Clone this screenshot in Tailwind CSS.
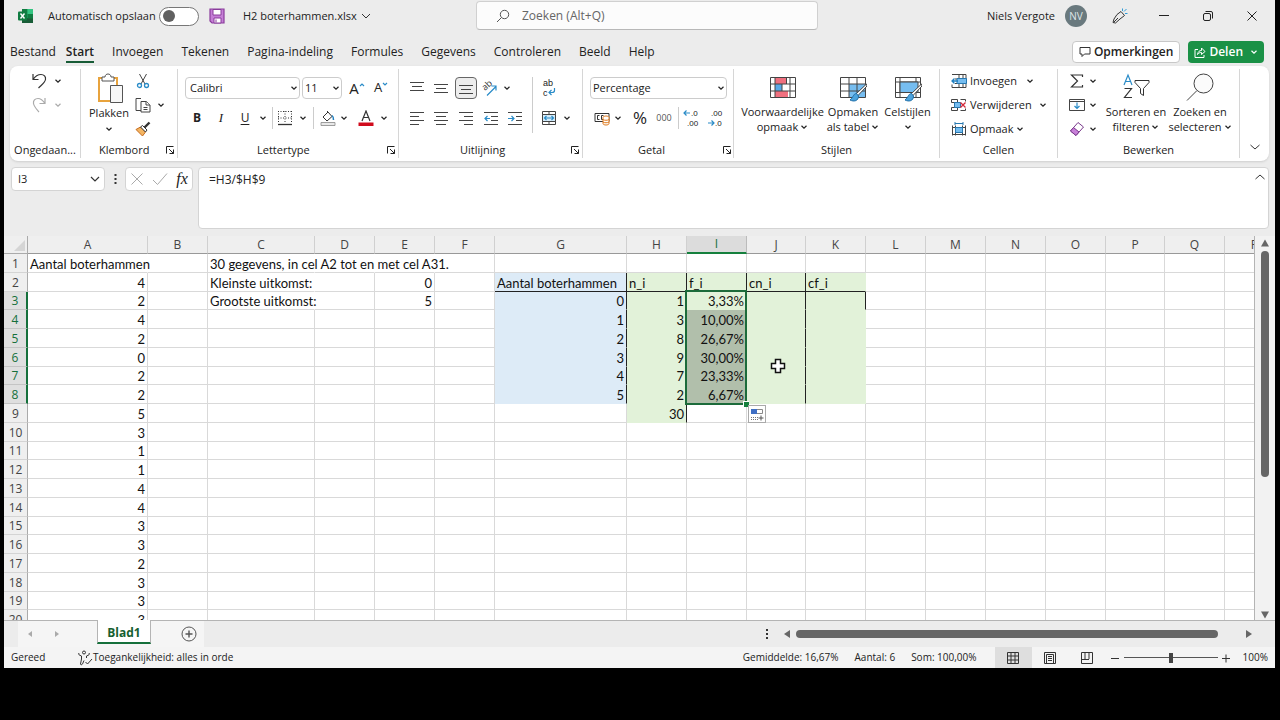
<!DOCTYPE html>
<html lang="nl">
<head>
    <meta charset="UTF-8">
    <meta name="viewport" content="width=device-width, initial-scale=1.0">
    <title>H2 boterhammen.xlsx - Excel</title>
    <script src="https://cdn.jsdelivr.net/npm/@tailwindcss/browser@4"></script>
</head>
<body class="bg-black h-screen overflow-hidden flex flex-col pl-1 pr-[5px] pb-13 font-['Open_Sans','Noto_Sans',sans-serif] text-[11px] text-[#222]">

    <!-- Shared icons -->
    <svg class="hidden">
        <symbol id="chev" viewBox="0 0 8 8"><path d="M1.5 2.8 4 5.2 6.5 2.8" fill="none" stroke="currentColor" stroke-width="1.2"/></symbol>
        <symbol id="launch" viewBox="0 0 10 10"><path d="M1.5 8.5v-7h7M4 4l4.500 4.500M8.500 4.500v4h-4" fill="none" stroke="currentColor"/></symbol>
    </svg>

    <div class="flex-1 min-h-0 flex flex-col bg-[#ececec]">

        <!-- Title bar -->
        <header class="grid grid-cols-[472px_342px_1fr] h-8 shrink-0">
            <div class="flex items-center pl-3.5">
                <svg class="w-4 h-4" viewBox="0 0 16 16">
                    <path d="M4 1h11v14H4z" fill="#21a366"/>
                    <path d="M4 1h5.500v5H4z" fill="#107c41"/><path d="M9.500 1H15v5H9.500z" fill="#33c481"/>
                    <path d="M4 10h11v5H4z" fill="#185c37"/><path d="M9.500 6H15v4.500H9.500z" fill="#107c41"/>
                    <rect y="3.500" width="9" height="9" rx="1" fill="#107c41"/>
                    <path d="m2.500 5.500 4 5m0-5-4 5" stroke="#fff" stroke-width="1.400"/>
                </svg>
                <label for="autosave" class="ml-3.5 w-[107px] whitespace-nowrap">Automatisch opslaan</label>
                <input id="autosave" type="checkbox" class="appearance-none ml-1 w-10 h-[19px] rounded-full border border-[#777] bg-white flex items-center before:content-[''] before:block before:w-3 before:h-3 before:ml-[3px] before:rounded-full before:bg-[#606060] checked:before:ml-6">
                <button aria-label="Opslaan" class="ml-2.5">
                    <svg class="w-4 h-4" viewBox="0 0 16 16"><path d="M1 1h14v14H3l-2-2z" fill="#c57fd6" stroke="#8a3c9c" stroke-width="1.200"/><path d="M4 1.500h8v5.500H4z" fill="#fff" stroke="#8a3c9c"/><path d="M5 10h7v5H5z" fill="#fff" stroke="#8a3c9c"/><path d="M7 11.500v3" stroke="#8a3c9c"/></svg>
                </button>
                <button class="ml-[18px] flex items-center gap-1 whitespace-nowrap">H2 boterhammen.xlsx
                    <svg class="w-2.5 h-2.5" viewBox="0 0 10 10"><path d="m1 3 4 4 4-4" fill="none" stroke="#333"/></svg>
                </button>
            </div>
            <label class="h-[29px] mt-px flex items-center bg-[#fcfcfc] border border-[#d0d0d0] border-b-[#b8b8b8] rounded pl-[19px]">
                <svg class="w-3.5 h-3.5" viewBox="0 0 14 14" fill="none" stroke="#555"><circle cx="8.500" cy="5.500" r="4.200"/><path d="M5.500 8.500 1 13"/></svg>
                <input type="text" aria-label="Zoeken" placeholder="Zoeken (Alt+Q)" class="flex-1 ml-3 text-[12px] outline-none placeholder:text-[#666]">
            </label>
            <div class="flex items-center justify-end pr-px">
                <span>Niels Vergote</span>
                <span class="ml-2.5 mr-[11px] w-[22px] h-[22px] rounded-full bg-[#69797e] text-[#dfe6e8] text-[10px] flex items-center justify-center">NV</span>
                <button aria-label="Pen" class="w-11 h-8 flex items-center justify-center">
                    <svg class="w-4 h-4" viewBox="0 0 16 16" fill="none" stroke="#333"><path d="m9 3.500 3.500 4-4.500 3.500L3.500 15 1 14.500 2 11l3-4.500zM2 14l4-4"/><path d="M10.500 3V.5M12 3.500l2.500-2.500M13 5.500h2.500" stroke="#2f9bd6"/></svg>
                </button>
                <button aria-label="Minimaliseren" class="w-11 h-8 flex items-center justify-center"><svg class="w-2.5 h-2.5" viewBox="0 0 10 10"><path d="M0 4.500h10" stroke="#222"/></svg></button>
                <button aria-label="Vorig formaat" class="w-11 h-8 flex items-center justify-center"><svg class="w-2.5 h-2.5" viewBox="0 0 10 10" fill="none" stroke="#222"><rect x=".5" y="2.500" width="7" height="7" rx="1.500"/><path d="M2.500.5H8A1.500 1.500 0 0 1 9.500 2v5.500"/></svg></button>
                <button aria-label="Sluiten" class="w-11 h-8 flex items-center justify-center"><svg class="w-2.5 h-2.5" viewBox="0 0 10 10"><path d="m.5.5 9 9m0-9-9 9" stroke="#222"/></svg></button>
            </div>
        </header>

        <!-- Ribbon tabs -->
        <nav class="flex items-center justify-between h-[34px] shrink-0 pl-1.5 pr-[11px]">
            <div class="flex items-center gap-[18px] pt-1.5 text-[12px] whitespace-nowrap">
                <button class="-mr-2">Bestand</button>
                <button class="font-semibold border-b-2 border-[#185c37] -mb-0.5">Start</button>
                <button>Invoegen</button>
                <button>Tekenen</button>
                <button>Pagina-indeling</button>
                <button>Formules</button>
                <button>Gegevens</button>
                <button>Controleren</button>
                <button>Beeld</button>
                <button>Help</button>
            </div>
            <div class="flex gap-2 pt-1.5 text-[12px] font-semibold">
                <button class="h-[22px] px-1.5 flex items-center gap-[3px] bg-white border border-[#c8c8c8] rounded whitespace-nowrap">
                    <svg class="w-3 h-3" viewBox="0 0 12 12"><path d="M1 1.500h10v6.500H5.500L3 10.500V8H1z" fill="none" stroke="#333"/></svg>Opmerkingen
                </button>
                <button class="h-[22px] px-1.5 flex items-center gap-[3px] bg-[#1a9146] text-white rounded">
                    <svg class="w-3 h-3" viewBox="0 0 12 12" fill="none" stroke="#fff"><path d="M4 3.500H1v8h9V9M3.500 8.500C4 5.500 5.500 4.500 7.500 4.500V2L11 5.500 7.500 8.500V6.500c-2 0-3 .5-4 2z"/></svg>Delen
                    <svg class="w-2 h-2 ml-1"><use href="#chev"/></svg>
                </button>
            </div>
        </nav>

        <!-- Ribbon -->
        <section class="mx-1.5 h-[95px] shrink-0 bg-white rounded-lg shadow-sm flex whitespace-nowrap *:my-[3px]">
            <div class="w-[71px] flex flex-col border-r border-[#d6d6d6]">
                <div class="flex-1 flex flex-col gap-1 pt-0.5 pl-5">
                    <div class="h-5 flex items-center gap-1.5">
                        <button aria-label="Ongedaan maken"><svg class="w-[18px] h-[18px]" viewBox="0 0 18 18"><path d="M3 2v5.500h5.500M3 7.500C5 4.500 8 2.500 11 2.500c3 0 5 2 4.500 5C15 10.500 12 12.500 8.500 16" fill="none" stroke="#333" stroke-width="1.200"/></svg></button>
                        <svg class="w-2 h-2"><use href="#chev"/></svg>
                    </div>
                    <div class="h-5 flex items-center gap-1.5 text-[#aaa]">
                        <button aria-label="Opnieuw"><svg class="w-[18px] h-[18px]" viewBox="0 0 18 18"><path d="M15 2v5.500H9.500M15 7.500C13 4.500 11 2.500 8 2.500c-3 0-5 2-4.500 5C4 10.500 6 12.500 9 16" fill="none" stroke="currentColor" stroke-width="1.200"/></svg></button>
                        <svg class="w-2 h-2"><use href="#chev"/></svg>
                    </div>
                </div>
                <div class="h-4 flex items-center justify-center">Ongedaan...</div>
            </div>

            <div class="w-[97px] flex flex-col border-r border-[#d6d6d6]">
                <div class="flex-1 flex pl-2">
                    <button class="w-10 pt-1 flex flex-col items-center">
                        <svg class="w-7 h-8 ml-1" viewBox="0 0 28 32">
                            <path d="M2 5h18v23H2z" fill="#fff" stroke="#e8a33d" stroke-width="2"/>
                            <path d="M5 8V4h3c0-2 1.500-3 3-3s3 1 3 3h3v4z" fill="#fff" stroke="#555"/>
                            <path d="M13.500 12.500h12v17h-12z" fill="#f7f7f7" stroke="#555"/>
                        </svg>
                        <span class="leading-4">Plakken</span>
                        <svg class="w-2 h-2 mt-1"><use href="#chev"/></svg>
                    </button>
                    <div class="ml-1.5 pt-0.5 flex flex-col gap-1">
                        <button aria-label="Knippen" class="h-5 flex items-center"><svg class="w-4 h-4" viewBox="0 0 16 16" fill="none"><path d="m4.500 1 5.500 10M11.500 1 6 11" stroke="#444"/><circle cx="4.500" cy="12.500" r="2" stroke="#2a8cc8" stroke-width="1.300"/><circle cx="11.500" cy="12.500" r="2" stroke="#2a8cc8" stroke-width="1.300"/></svg></button>
                        <button aria-label="Kopiëren" class="h-5 flex items-center gap-1.5"><svg class="w-4 h-4" viewBox="0 0 16 16" fill="#fff" stroke="#444"><path d="M6 1.500H1v12h5"/><path d="M6 4.500h5.500L15 8v7H6z"/><path d="M11 4.500V8h4M8.500 10.500h4M8.500 12.500h4"/></svg><svg class="w-2 h-2"><use href="#chev"/></svg></button>
                        <button aria-label="Opmaak kopiëren" class="h-5 flex items-center"><svg class="w-4 h-4" viewBox="0 0 16 16"><path d="M1 8.500 5.500 6l5 5-3 4z" fill="#f3b562" stroke="#c66a1c"/><path d="m5.500 6 2-1.500L12 9l-1.500 2z" fill="#fff" stroke="#333"/><path d="m9.500 6.500 5-5" stroke="#333" stroke-width="2.400"/></svg></button>
                    </div>
                </div>
                <div class="h-4 flex items-center pl-[18px] justify-between pr-0.5">Klembord<svg class="w-2.5 h-2.5"><use href="#launch"/></svg></div>
            </div>

            <div class="w-[221px] flex flex-col border-r border-[#d6d6d6]">
                <div class="flex-1 flex flex-col gap-2 pt-2 pl-[7px]">
                    <div class="h-[22px] flex items-center">
                        <label class="relative w-[115px] h-[22px]"><select aria-label="Lettertype" class="appearance-none w-full h-full border border-[#ccc] rounded pl-1 bg-white"><option>Calibri</option></select><svg class="w-2 h-2 absolute right-0.5 top-[7px]"><use href="#chev"/></svg></label>
                        <label class="relative w-10 h-[22px] ml-0.5"><select aria-label="Tekengrootte" class="appearance-none w-full h-full border border-[#ccc] rounded pl-0.5 bg-white"><option>11</option></select><svg class="w-2 h-2 absolute right-0.5 top-[7px]"><use href="#chev"/></svg></label>
                        <button aria-label="Lettertype vergroten" class="w-6 flex items-center justify-center ml-[3px] text-[15px]">A<svg class="w-1.5 h-3" viewBox="0 0 6 12"><path d="m1 4 2-2 2 2" fill="none" stroke="#2a8cc8" stroke-width="1.200"/></svg></button>
                        <button aria-label="Lettertype verkleinen" class="w-6 flex items-center justify-center text-[13px]">A<svg class="w-1.5 h-3" viewBox="0 0 6 12"><path d="m1 1 2 2 2-2" fill="none" stroke="#2a8cc8" stroke-width="1.200"/></svg></button>
                    </div>
                    <div class="h-[22px] flex items-center">
                        <button class="w-6 text-[12px] font-bold">B</button>
                        <button class="w-6 text-[13px] italic font-['Liberation_Serif',serif]">I</button>
                        <button class="w-6 text-[12px] underline underline-offset-2">U</button>
                        <svg class="w-2 h-2 ml-0.5 mr-[5px]"><use href="#chev"/></svg>
                        <span class="w-px h-[22px] bg-[#ccc] mr-1"></span>
                        <button aria-label="Randen" class="w-4"><svg class="w-4 h-4" viewBox="0 0 16 16" stroke="#333" fill="none"><path d="M1.500 1v12M14.500 1v12M8 1v12M1 1.500h14M1 8h14" stroke-dasharray="1 1.500"/><path d="M1 14.500h14" stroke-width="1.300"/></svg></button>
                        <svg class="w-2 h-2 mx-1.5"><use href="#chev"/></svg>
                        <span class="w-px h-[22px] bg-[#ccc] mr-1.5"></span>
                        <button aria-label="Opvulkleur" class="w-4"><svg class="w-4 h-4" viewBox="0 0 16 16" stroke="#333" fill="none"><path d="m3 7 5-5 4 4.500-5 4.500zM8 2 7 1"/><path d="M12 5.500c1.500 1 1.500 2 1.500 4.500" stroke="#1f7fc0" stroke-width="1.500"/><path d="M1 12.500h14v3H1z" fill="#e8e8e8" stroke="#888" stroke-width=".8"/></svg></button>
                        <svg class="w-2 h-2 mx-1"><use href="#chev"/></svg>
                        <button aria-label="Tekstkleur" class="w-4 ml-1.5"><svg class="w-4 h-4" viewBox="0 0 16 16"><path d="M4 11 8 1l4 10M5.500 7.500h5" fill="none" stroke="#333" stroke-width="1.200"/><path d="M.5 12.500h15V16H.5z" fill="#d00b1c"/></svg></button>
                        <svg class="w-2 h-2 ml-1.5"><use href="#chev"/></svg>
                    </div>
                </div>
                <div class="h-4 flex items-center pl-[79px] justify-between pr-0.5">Lettertype<svg class="w-2.5 h-2.5"><use href="#launch"/></svg></div>
            </div>

            <div class="w-[184px] flex flex-col border-r border-[#d6d6d6]">
                <div class="flex-1 flex pt-2 pl-1.5">
                    <div class="w-[128px] h-14 border-r border-[#ccc] flex flex-col gap-2">
                        <div class="h-[22px] flex items-center">
                            <button aria-label="Boven uitlijnen" class="w-6 flex justify-center"><svg class="w-3.5 h-3.5" viewBox="0 0 14 14"><path d="M0 1.500h14M2 5.500h10M0 9.500h14" stroke="#444"/></svg></button>
                            <button aria-label="Midden uitlijnen" class="w-6 flex justify-center"><svg class="w-3.5 h-3.5" viewBox="0 0 14 14"><path d="M0 3.500h14M2 7.500h10M0 11.500h14" stroke="#444"/></svg></button>
                            <button aria-label="Onder uitlijnen" class="w-[22px] h-[22px] mx-0.5 flex items-center justify-center border border-[#666] rounded bg-[#ededed]"><svg class="w-3.5 h-3.5" viewBox="0 0 14 14"><path d="M0 4.500h14M2 8.500h10M0 12.500h14" stroke="#444"/></svg></button>
                            <button aria-label="Afdrukstand" class="w-5 flex justify-center"><svg class="w-[18px] h-[18px]" viewBox="0 0 18 18"><text font-size="9" fill="#333" transform="translate(5 12) rotate(-42)">ab</text><path d="m7 16.500 9-9M11.500 7H16v4.500" fill="none" stroke="#2a8cc8" stroke-width="1.200"/></svg></button>
                            <svg class="w-2 h-2 ml-1"><use href="#chev"/></svg>
                        </div>
                        <div class="h-[22px] flex items-center">
                            <button aria-label="Links uitlijnen" class="w-6 flex justify-center"><svg class="w-3.5 h-3.5" viewBox="0 0 14 14"><path d="M0 1.500h14M0 5.500h9M0 9.500h14M0 13.500h9" stroke="#444"/></svg></button>
                            <button aria-label="Centreren" class="w-6 flex justify-center"><svg class="w-3.5 h-3.5" viewBox="0 0 14 14"><path d="M0 1.500h14M2 5.500h10M0 9.500h14M2 13.500h10" stroke="#444"/></svg></button>
                            <button aria-label="Rechts uitlijnen" class="w-[26px] flex justify-center"><svg class="w-3.5 h-3.5" viewBox="0 0 14 14"><path d="M0 1.500h14M5 5.500h9M0 9.500h14M5 13.500h9" stroke="#444"/></svg></button>
                            <button aria-label="Inspringing verkleinen" class="w-6 flex justify-center"><svg class="w-3.5 h-3.5" viewBox="0 0 14 14"><path d="M0 1.500h14M7 5.500h7M7 9.500h7M0 13.500h14" stroke="#444"/><path d="M6 7.500H1m2.500-2.500L1 7.500 3.500 10" fill="none" stroke="#2a8cc8" stroke-width="1.200"/></svg></button>
                            <button aria-label="Inspringing vergroten" class="w-6 flex justify-center"><svg class="w-3.5 h-3.5" viewBox="0 0 14 14"><path d="M0 1.500h14M8 5.500h6M8 9.500h6M0 13.500h14" stroke="#444"/><path d="M0 7.500h6M3.500 5 6 7.500 3.500 10" fill="none" stroke="#2a8cc8" stroke-width="1.200"/></svg></button>
                        </div>
                    </div>
                    <div class="flex flex-col gap-2 pl-2">
                        <button aria-label="Terugloop" class="h-[22px] flex items-center"><svg class="w-4 h-5" viewBox="0 0 16 20"><g font-family="Liberation Sans" font-size="9" fill="#222"><text x="2" y="8">ab</text><text x="2" y="18">c</text></g><path d="M13.500 10v2.500c0 1.500-1 2-2.500 2H8m2.500-2.500L8 14.500l2.500 2.500" fill="none" stroke="#2a8cc8" stroke-width="1.200"/></svg></button>
                        <button aria-label="Samenvoegen en centreren" class="h-[22px] flex items-center gap-1.5"><svg class="w-4 h-4" viewBox="0 0 16 16"><path d="M1.500 1.500h13v13h-13zM8 1.500v3M8 11.500v3" fill="#fff" stroke="#444"/><path d="M1.500 4.500h13v7h-13z" fill="#d5ecfa" stroke="#444"/><path d="M3.500 8h9M5.500 6l-2 2 2 2M10.500 6l2 2-2 2" fill="none" stroke="#2a8cc8" stroke-width="1.200"/></svg><svg class="w-2 h-2"><use href="#chev"/></svg></button>
                    </div>
                </div>
                <div class="h-4 flex items-center pl-[61px] justify-between pr-0.5">Uitlijning<svg class="w-2.5 h-2.5"><use href="#launch"/></svg></div>
            </div>

            <div class="w-[151px] flex flex-col border-r border-[#d6d6d6]">
                <div class="flex-1 flex flex-col gap-2 pt-2 pl-[7px]">
                    <label class="relative w-[137px] h-[22px]"><select aria-label="Getalnotatie" class="appearance-none w-full h-full border border-[#ccc] rounded pl-0.5 bg-white"><option>Percentage</option></select><svg class="w-2 h-2 absolute right-0.5 top-[7px]"><use href="#chev"/></svg></label>
                    <div class="h-[22px] flex items-center">
                        <button aria-label="Financiële notatie" class="ml-1"><svg class="w-4 h-4" viewBox="0 0 16 16"><path d="M1 3.500h14v8H1z" fill="#fff" stroke="#333"/><path d="M5.500 5.500h-2v4h2M9.500 5.500h-2v4h2" fill="none" stroke="#333"/><path d="M9 7.500c0-2 6-2 6 0v6c0 2-6 2-6 0z" fill="#fff" stroke="#e07b1e"/><path d="M9 9.500c1 1 5 1 6 0M9 12c1 1 5 1 6 0" fill="none" stroke="#e07b1e"/></svg></button>
                        <svg class="w-2 h-2 ml-1"><use href="#chev"/></svg>
                        <button class="w-6 ml-1.5 text-[17px]">%</button>
                        <button class="w-6 text-[9px] text-[#555]">000</button>
                        <span class="w-px h-[22px] bg-[#ccc] ml-0.5 mr-1"></span>
                        <button aria-label="Meer decimalen" class="w-[18px]"><svg class="w-[18px] h-5" viewBox="0 0 18 20"><path d="M7 5H1m2.500-2.500L1 5l2.500 2.500" fill="none" stroke="#2a8cc8" stroke-width="1.200"/><g font-family="Liberation Sans" font-size="8" fill="#222"><text x="8" y="8">.0</text><text x="4" y="18">.00</text></g></svg></button>
                        <button aria-label="Minder decimalen" class="w-[18px] ml-1.5"><svg class="w-[18px] h-5" viewBox="0 0 18 20"><g font-family="Liberation Sans" font-size="8" fill="#222"><text x="4" y="8">.00</text><text x="8" y="18">.0</text></g><path d="M1 15h6M4.500 12.500 7 15l-2.500 2.500" fill="none" stroke="#2a8cc8" stroke-width="1.200"/></svg></button>
                    </div>
                </div>
                <div class="h-4 flex items-center pl-[55px] justify-between pr-px">Getal<svg class="w-2.5 h-2.5"><use href="#launch"/></svg></div>
            </div>

            <div class="w-[206px] flex flex-col border-r border-[#d6d6d6]">
                <div class="flex-1 flex pt-1.5 pl-1.5">
                    <button class="w-[85px] flex flex-col items-center leading-[15px]">
                        <svg class="w-7 h-7 mb-px" viewBox="0 0 28 28"><path d="M1.500 2.500h25v20h-25z" fill="#fff"/><path d="M6 2.500h11.500V9H6z M6 16h13v6.500H6z" fill="#f0707f"/><path d="M6 9h7v7H6z" fill="#5aa9e6"/><path d="M1.500 2.500h25v20h-25zM1.500 9h25M1.500 16h25M6 2.500v20M21 2.500v20M13 9v7M17.500 2.500V9" fill="none" stroke="#444"/></svg>
                        <span>Voorwaardelijke</span><span class="flex items-center gap-0.5">opmaak <svg class="w-2 h-2"><use href="#chev"/></svg></span>
                    </button>
                    <button class="w-14 flex flex-col items-center leading-[15px]">
                        <svg class="w-7 h-7 mb-px" viewBox="0 0 28 28"><path d="M1.500 2.500h25v20h-25z" fill="#fff"/><path d="M10 9h16.500v13.500H10z" fill="#76bdf0"/><path d="M1.500 2.500h25v20h-25zM1.500 9h25M1.500 16h25M10 2.500v20M18 2.500v20" fill="none" stroke="#444"/><path d="M27.500 9 17 19l1.500 2L28 11z" fill="#fff" stroke="#444"/><path d="M17.500 18.500c-3 0-3 3.500-6.500 6.500 4 2 8.500 1 8.500-4z" fill="#4ca3dd" stroke="#1f6fa8"/></svg>
                        <span>Opmaken</span><span class="flex items-center gap-0.5">als tabel <svg class="w-2 h-2"><use href="#chev"/></svg></span>
                    </button>
                    <button class="w-[53px] flex flex-col items-center leading-[15px]">
                        <svg class="w-7 h-7 mb-px" viewBox="0 0 28 28"><path d="M1.500 2.500h25v20h-25z" fill="#fff"/><path d="M1.500 2.500h25v20h-25zM1.500 7h25M1.500 17.500h25M6 2.500v20M22 2.500v20" fill="none" stroke="#444"/><path d="M6 7h18v10.500H6z" fill="#76bdf0" stroke="#444"/><path d="M27.500 9 17 19l1.500 2L28 11z" fill="#fff" stroke="#444"/><path d="M17.500 18.500c-3 0-3 3.500-6.500 6.500 4 2 8.500 1 8.500-4z" fill="#4ca3dd" stroke="#1f6fa8"/></svg>
                        <span>Celstijlen</span><svg class="w-2 h-2 mt-1"><use href="#chev"/></svg>
                    </button>
                </div>
                <div class="h-4 flex items-center justify-center">Stijlen</div>
            </div>

            <div class="w-[118px] flex flex-col border-r border-[#d6d6d6]">
                <div class="flex-1 flex flex-col gap-1 pt-0.5 pl-[11px] items-start">
                    <button class="h-5 flex items-center gap-[3px]"><svg class="w-4 h-4" viewBox="0 0 16 16"><path d="M4 1.500h11v13H1v-3M4 6h11M4 10.500h11M8 1.500v13M12 1.500v13M1 1.500h3" fill="none" stroke="#444"/><path d="M6 5.500h9.500v5H6z" fill="#76bdf0" stroke="#2878b0"/><path d="M7 8H1m2.500-2.500L1 8l2.500 2.500" fill="none" stroke="#1f7fc0" stroke-width="1.300"/></svg>Invoegen<svg class="w-2 h-2 ml-1.5"><use href="#chev"/></svg></button>
                    <button class="h-5 flex items-center gap-[3px]"><svg class="w-4 h-4" viewBox="0 0 16 16"><path d="M.5 2.500h6v3M.5 2.500v3h6M.5 13.500h6v-3h-6zM9.500 2.500h5v2M9.500 13.500h5v-2" fill="none" stroke="#444"/><path d="M3.500 5.500h6v5h-6z" fill="#76bdf0" stroke="#2878b0"/><path d="m9.500 5.500 5 5m0-5-5 5" stroke="#d42a3a" stroke-width="1.300"/></svg>Verwijderen<svg class="w-2 h-2 ml-1"><use href="#chev"/></svg></button>
                    <button class="h-5 flex items-center gap-[3px]"><svg class="w-4 h-4" viewBox="0 0 16 16"><path d="M1.500 4.500v10M14.500 4.500v10M1 6.500h14M1 13.500h14M4.500 4.500v10M11.500 4.500v10" fill="none" stroke="#444"/><path d="M4.500 6.500h7v5h-7z" fill="#76bdf0" stroke="#2878b0"/><path d="M4 1v3M12 1v3M4 2.500h8" stroke="#2878b0"/></svg>Opmaak<svg class="w-2 h-2"><use href="#chev"/></svg></button>
                </div>
                <div class="h-4 flex items-center justify-center">Cellen</div>
            </div>

            <div class="w-[182px] flex flex-col border-r border-[#d6d6d6]">
                <div class="flex-1 flex pl-[11px]">
                    <div class="flex flex-col gap-1 pt-0.5 w-[35px]">
                        <button aria-label="AutoSom" class="h-5 flex items-center gap-1"><svg class="w-4 h-4" viewBox="0 0 16 16"><path d="M13.500 4V2h-11L8.500 8l-6 6h11v-2" fill="none" stroke="#333" stroke-width="1.200"/></svg><svg class="w-2 h-2"><use href="#chev"/></svg></button>
                        <button aria-label="Doorvoeren" class="h-5 flex items-center gap-1"><svg class="w-4 h-4" viewBox="0 0 16 16"><path d="M.5 2.500h15v11H.5zM.5 4.500h15" fill="none" stroke="#444"/><path d="M8 5.500v6M5.500 9 8 11.500 10.500 9" fill="none" stroke="#2a8cc8" stroke-width="1.200"/></svg><svg class="w-2 h-2"><use href="#chev"/></svg></button>
                        <button aria-label="Wissen" class="h-5 flex items-center gap-1"><svg class="w-4 h-4" viewBox="0 0 16 16"><path d="M9 1.500 14.500 6 7 14.500 1.500 10z" fill="#fff" stroke="#7a3a8c"/><path d="m4.500 6.500 5.500 4.500-3 3.500L1.500 10z" fill="#c77fd8" stroke="#7a3a8c"/></svg><svg class="w-2 h-2"><use href="#chev"/></svg></button>
                    </div>
                    <button class="w-16 pt-1 flex flex-col items-center leading-[15px]">
                        <svg class="w-7 h-7 mb-[3px]" viewBox="0 0 28 28"><path d="m2 12 4-10 4 10M3.500 8.500h5" fill="none" stroke="#2a8cc8" stroke-width="1.200"/><path d="M2.500 15.500h7l-7 9h7.500" fill="none" stroke="#333" stroke-width="1.200"/><path d="M13 7.500h14v2l-5.500 6v7l-3-2v-5L13 9.500z" fill="none" stroke="#333"/></svg>
                        <span>Sorteren en</span><span class="flex items-center gap-0.5">filteren <svg class="w-2 h-2"><use href="#chev"/></svg></span>
                    </button>
                    <button class="w-16 pt-1 flex flex-col items-center leading-[15px]">
                        <svg class="w-7 h-7 mb-[3px]" viewBox="0 0 28 28" fill="none" stroke="#444"><circle cx="17.500" cy="10.500" r="9.500" fill="#fbfbfb"/><path d="M11 17.500 1 27.500"/></svg>
                        <span>Zoeken en</span><span class="flex items-center gap-0.5">selecteren <svg class="w-2 h-2"><use href="#chev"/></svg></span>
                    </button>
                </div>
                <div class="h-4 flex items-center justify-center">Bewerken</div>
            </div>

            <button aria-label="Lint samenvouwen" class="flex-1 flex items-end justify-center pb-1.5"><svg class="w-2.5 h-2.5" viewBox="0 0 10 10"><path d="m.5 3 4.500 4 4.500-4" fill="none" stroke="#333"/></svg></button>
        </section>

        <!-- Formula bar -->
        <section class="flex shrink-0 pt-1.5 pb-[7px] pl-[7px] pr-1.5">
            <div class="flex items-center w-[94px] h-6 bg-white border border-[#d4d4d4] rounded pl-1.5 pr-1">
                <input type="text" aria-label="Naamvak" value="I3" class="w-full min-w-0 outline-none">
                <svg class="w-2.5 h-2.5 shrink-0" viewBox="0 0 10 10"><path d="m1 3 4 4 4-4" fill="none" stroke="#333" stroke-width="1.200"/></svg>
            </div>
            <svg class="w-5 h-6" viewBox="0 0 20 24" fill="#333"><path d="M9.500 7h2v2h-2zM9.500 11h2v2h-2zM9.500 15h2v2h-2z"/></svg>
            <div class="flex items-center justify-around w-[68px] h-6 bg-white border border-[#d4d4d4] rounded">
                <button aria-label="Annuleren"><svg class="w-3.5 h-3.5" viewBox="0 0 14 14"><path d="m1.500 1.500 11 11m0-11-11 11" stroke="#aaa"/></svg></button>
                <button aria-label="Invoeren"><svg class="w-4 h-3.5" viewBox="0 0 16 14"><path d="m1 8 4.500 4.500L15 1.500" fill="none" stroke="#aaa"/></svg></button>
                <button aria-label="Functie invoegen" class="font-['Liberation_Serif',serif] italic text-[16px] leading-5">fx</button>
            </div>
            <div class="relative flex-1 h-[62px] ml-[5px]">
                <textarea aria-label="Formulebalk" class="w-full h-full resize-none outline-none bg-white border border-[#d4d4d4] rounded px-2.5 pt-1 text-[12px] leading-4 block">=H3/$H$9</textarea>
                <svg class="w-2.5 h-2.5 absolute right-1 top-[5px]" viewBox="0 0 10 10"><path d="m.5 7 4.500-4 4.500 4" fill="none" stroke="#333"/></svg>
            </div>
        </section>

        <!-- Sheet -->
        <main class="flex-1 min-h-0 flex border-b border-[#b4b4b4]">
            <div class="flex-1 min-w-0 overflow-hidden bg-white border-r border-[#b4b4b4]">
                <table id="sheet" class="table-fixed w-[1281px] h-[393px] border-separate border-spacing-0 whitespace-nowrap"></table>
            </div>
            <div class="w-5 flex flex-col items-center pt-0.5 bg-[#f2f2f2]">
                <svg class="w-2.5 h-2.5" viewBox="0 0 10 10"><path d="m5 1.500 4 7H1z" fill="#666"/></svg>
                <div class="w-2 h-[226px] mt-[3px] rounded-full bg-[#666]"></div>
                <svg class="w-2.5 h-2.5 mt-auto" viewBox="0 0 10 10"><path d="m5 8.500 4-7H1z" fill="#666"/></svg>
            </div>
        </main>

        <!-- Sheet tabs -->
        <section class="h-[26px] shrink-0 flex">
            <div class="ml-3.5 w-[186px] flex bg-[#f5f5f5]">
                <button aria-label="Vorig blad" class="w-6 flex items-center justify-center"><svg class="w-1.5 h-2" viewBox="0 0 6 8"><path d="M5 1v6L1 4z" fill="#aaa"/></svg></button>
                <button aria-label="Volgend blad" class="w-[29px] flex items-center justify-center"><svg class="w-1.5 h-2" viewBox="0 0 6 8"><path d="M1 1v6l4-3z" fill="#aaa"/></svg></button>
                <button class="ml-[26px] -mt-px w-[54px] h-6 pt-1 bg-white border-x border-[#b4b4b4] border-b-2 border-b-[#15703b] font-bold text-[12px] leading-4 text-[#15602f]">Blad1</button>
                <button aria-label="Nieuw blad" class="ml-[30px]"><svg class="w-4 h-4" viewBox="0 0 16 16" fill="none" stroke="#555"><circle cx="8" cy="8" r="7"/><path d="M8 4.500v7M4.500 8h7" stroke-width="1.400"/></svg></button>
            </div>
            <div class="ml-auto flex items-center w-[516px]">
                <svg class="w-4 h-3" viewBox="0 0 16 12" fill="#333"><path d="M7 1h2v2H7zM7 5h2v2H7zM7 9h2v2H7z"/></svg>
                <svg class="w-2 h-2.5 ml-2" viewBox="0 0 8 10"><path d="M7 1v8L1 5z" fill="#666"/></svg>
                <div class="ml-[5px] flex-1 flex"><div class="w-[422px] h-2 rounded-full bg-[#666]"></div></div>
                <svg class="w-2 h-2.5 mr-[22px]" viewBox="0 0 8 10"><path d="M1 1v8l6-4z" fill="#666"/></svg>
            </div>
        </section>

        <!-- Status bar -->
        <footer class="h-[21px] shrink-0 flex items-center bg-[#f4f4f4] pl-[7px] pr-[7px] text-[10px] whitespace-nowrap">
            <span class="w-[66px]">Gereed</span>
            <svg class="w-4 h-4" viewBox="0 0 16 16" fill="none" stroke="#333"><circle cx="7" cy="2.500" r="1.500"/><path d="M2 3c-1 1.500 0 2 2.500 3v3l-1 5c0 1 1.500 1 2 0L7 10.500M12 3c1 1.500 0 2-2.500 3v2M8.500 12l2 2 4.500-5"/></svg>
            <span>Toegankelijkheid: alles in orde</span>
            <div class="ml-auto flex items-center">
                <span>Gemiddelde: 16,67%</span>
                <span class="ml-4">Aantal: 6</span>
                <span class="ml-4 mr-[18px]">Som: 100,00%</span>
                <button aria-label="Normaal" class="w-[37px] h-[21px] flex items-center justify-center bg-[#dedede]"><svg class="w-3.5 h-3.5" viewBox="0 0 14 14"><path d="M1.500 1.500h11v11h-11zM1.500 5h11M1.500 9h11M5 1.500v11M9 1.500v11" fill="none" stroke="#333"/></svg></button>
                <button aria-label="Pagina-indeling" class="w-[37px] h-[21px] flex items-center justify-center"><svg class="w-3.5 h-3.5" viewBox="0 0 14 14" fill="none" stroke="#333"><path d="M1.500 1.500h11v11h-11zM3.500 3.500h7v9h-7zM5 5.500h4M5 7.500h4M5 9.500h4"/></svg></button>
                <button aria-label="Pagina-eindevoorbeeld" class="w-[37px] h-[21px] flex items-center justify-center"><svg class="w-3.5 h-3.5" viewBox="0 0 14 14" fill="none" stroke="#333"><path d="M1.500 1.500h11v11h-11zM5 1.500V8M9 1.500V8M1.500 8.500H9"/></svg></button>
                <button aria-label="Uitzoomen" class="ml-1 mr-1"><svg class="w-2.5 h-2.5" viewBox="0 0 10 10"><path d="M1 5.500h8" stroke="#333"/></svg></button>
                <input type="range" aria-label="Zoomen" min="0" max="100" value="50" class="appearance-none w-[94px] h-px bg-[#555] [&::-webkit-slider-thumb]:appearance-none [&::-webkit-slider-thumb]:w-1 [&::-webkit-slider-thumb]:h-2.5 [&::-webkit-slider-thumb]:bg-[#444]">
                <button aria-label="Inzoomen" class="ml-[3px]"><svg class="w-2.5 h-2.5" viewBox="0 0 10 10"><path d="M1 5.500h8M5 1.500v8" stroke="#333"/></svg></button>
                <span class="ml-3">100%</span>
            </div>
        </footer>
    </div>

    <script>
        const columns = "ABCDEFGHIJKLMNOPQR".split("");
        const widths = [24, 120, 60, 107, 60, 60, 60, 132, 60, 60, 59, 60, 60, 60, 60, 60, 59, 60, 60];
        const rowCount = 20;

        const cells = {
            A1: "Aantal boterhammen", C1: "30 gegevens, in cel A2 tot en met cel A31.",
            C2: "Kleinste uitkomst:", E2: 0, C3: "Grootste uitkomst:", E3: 5,
            G2: "Aantal boterhammen", H2: "n_i", I2: "f_i", J2: "cn_i", K2: "cf_i", H9: 30
        };
        [4, 2, 4, 2, 0, 2, 2, 5, 3, 1, 1, 4, 4, 3, 3, 2, 3, 3, 3].forEach((v, i) => cells["A" + (i + 2)] = v);
        [1, 3, 8, 9, 7, 2].forEach((v, i) => { cells["G" + (i + 3)] = i; cells["H" + (i + 3)] = v; });
        ["3,33%", "10,00%", "26,67%", "30,00%", "23,33%", "6,67%"].forEach((v, i) => cells["I" + (i + 3)] = v);

        // cells whose right grid line is covered by overflowing text
        const overflow = ["A1", "C1", "D1", "E1", "C2", "C3"];

        const selection = `
            <div class="absolute z-10 -left-0.5 -top-0.5 w-[62px] h-[115px] border-2 border-[#1c6b3a] pointer-events-none">
                <span class="absolute -right-1 -bottom-1 w-1.5 h-1.5 bg-[#15803d] border-l border-t border-white"></span>
            </div>`;
        const fillOptions = `
            <button aria-label="Opties voor automatisch doorvoeren" class="absolute z-10 left-px top-px w-[18px] h-[18px] bg-white border border-[#aaa] flex items-center justify-center">
                <svg class="w-3.5 h-3.5" viewBox="0 0 14 14"><path d="M1.500 2.500h11v4h-11z" fill="#fff" stroke="#888"/><path d="M1 2h6v5H1z" fill="#3f6fc4"/><path d="M1 10.500h7M1 12.500h7" stroke="#777" stroke-dasharray="1 1"/><path d="M11 8.500v5M8.500 11h5" stroke="#555"/></svg>
            </button>`;
        const cursor = `
            <svg class="absolute z-10 left-[23px] top-2.5 w-4 h-4" viewBox="0 0 16 16"><path d="M5.500 1.500h5v4h4v5h-4v4h-5v-4h-4v-5h4z" fill="#fff" stroke="#111" stroke-width="1.500"/></svg>`;
        const overlays = { I3: selection, J9: fillOptions, J6: cursor };

        function cellClass(col, row) {
            const id = col + row;
            const inTable = row >= 2 && row <= 8;
            let cls = "relative px-0.5 pt-0.5 pb-0 leading-[15px] align-bottom border-r border-b";

            if (typeof cells[id] === "number" || (col === "I" && row > 2)) cls += " text-right";

            if (col === "I" && row > 3 && row < 9) cls += " bg-[#b1bfab]";
            else if (col === "G" && inTable) cls += " bg-[#ddebf7]";
            else if ("HIJK".includes(col) && inTable || id === "H9") cls += " bg-[#e2f2d9]";

            if ("GHIJ".includes(col) && inTable || id === "H9" || id === "K3") cls += " border-r-[#222]";
            else if (col === "K" && inTable) cls += " border-r-[#e2f2d9]";
            else if (overflow.includes(id)) cls += " border-r-transparent";
            else cls += " border-r-[#d9d9d9]";

            if ("GHIJK".includes(col) && row === 2) cls += " border-b-[#222]";
            else if (col === "G" && inTable) cls += " border-b-[#ddebf7]";
            else if (col === "I" && row > 3 && row < 9) cls += " border-b-[#b1bfab]";
            else if ("HIJK".includes(col) && inTable || id === "H9") cls += " border-b-[#e2f2d9]";
            else cls += " border-b-[#d9d9d9]";
            return cls;
        }

        let html = "<colgroup>" + widths.map(w => `<col style="width:${w}px">`).join("") + "</colgroup>";
        html += `<thead><tr class="h-[18px] text-[12px] leading-4 text-[#444]"><th class="bg-[#efefef] border-b border-r border-[#aaa]"><svg class="w-3 h-3 ml-auto mr-0.5" viewBox="0 0 12 12"><path d="M12 1v11H1z" fill="#d5d5d5"/></svg></th>`;
        columns.forEach(col => {
            const cls = col === "I"
                ? "bg-[#dcdcdc] text-[#15703b] font-normal border-r border-b-2 border-r-[#bbb] border-b-[#15803d]"
                : "bg-[#efefef] font-normal border-r border-b border-r-[#d0d0d0] border-b-[#999]";
            html += `<th class="${cls}">${col}</th>`;
        });
        html += `</tr></thead><tbody class="text-[13px] text-[#111] font-['Lato','Open_Sans',sans-serif]">`;
        for (let row = 1; row <= rowCount; row++) {
            const cls = row >= 3 && row <= 8
                ? "bg-[#dfdfdf] text-[#15703b] border-r-2 border-r-[#15703b] border-b border-b-[#c4c4c4]"
                : "bg-[#efefef] text-[#444] border-r border-b border-r-[#aaa] border-b-[#d4d4d4]";
            html += `<tr><th class="font-normal text-[12px] pt-px leading-4 align-bottom font-['Open_Sans','Noto_Sans',sans-serif] ${cls}">${row}</th>`;
            columns.forEach(col => {
                const id = col + row;
                html += `<td class="${cellClass(col, row)}">${cells[id] ?? ""}${overlays[id] ?? ""}</td>`;
            });
            html += "</tr>";
        }
        document.getElementById("sheet").innerHTML = html + "</tbody>";
    </script>
</body>
</html>
